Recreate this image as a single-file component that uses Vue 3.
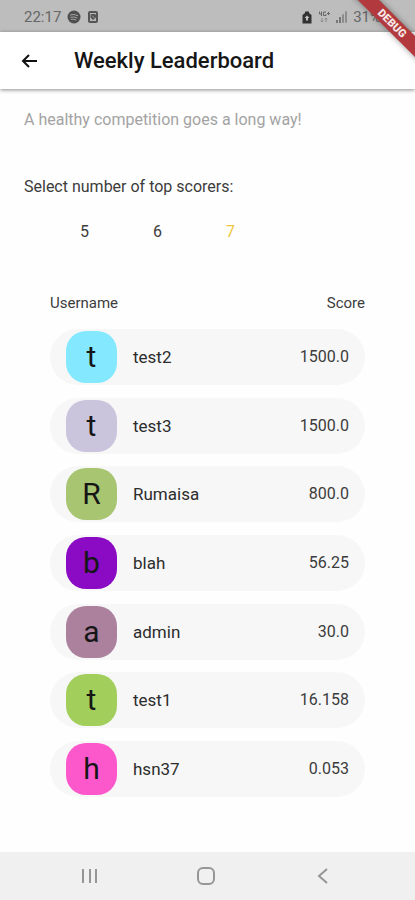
<script setup>
import { ref } from 'vue'

const counts = [5, 6, 7]
const selected = ref(7)

const players = [
  { name: 'test2', score: '1500.0', color: '#84e9ff' },
  { name: 'test3', score: '1500.0', color: '#cbc4dd' },
  { name: 'Rumaisa', score: '800.0', color: '#a8c572' },
  { name: 'blah', score: '56.25', color: '#8a0bc3' },
  { name: 'admin', score: '30.0', color: '#ab819e' },
  { name: 'test1', score: '16.158', color: '#a2cf5b' },
  { name: 'hsn37', score: '0.053', color: '#fd58cb' }
]
</script>

<template>
  <div class="screen">
    <div class="status">
      <span class="clock">22:17</span>
      <svg width="14" height="14" viewBox="0 0 14 14" aria-hidden="true">
        <circle cx="7" cy="7" r="6.5" fill="#4f4f4f" />
        <path d="M3.4 4.9q3.8-1.2 7.3.6M3.8 7.2q3.2-.9 6.1.6M4.2 9.3q2.5-.6 4.7.5" fill="none" stroke="#a4a4a4" stroke-width="1" stroke-linecap="round" />
      </svg>
      <svg width="12" height="14" viewBox="0 0 12 14" aria-hidden="true">
        <rect x="2" y="2" width="8" height="10" rx="1" fill="#b8b8b8" stroke="#555" stroke-width="2" />
        <path d="M4 4h4l1 1v2.500L6 10 3.500 7.500V5z" fill="#555" />
        <path d="M5 5.500 7.500 8" stroke="#999" />
      </svg>
      <span class="spacer"></span>
      <svg width="10" height="13" viewBox="0 0 10 13" aria-hidden="true">
        <path d="M3 .5h4V2l2.500 2v8.500h-9V4L3 2z" fill="#333" />
        <path d="M5 4.500 7.500 7H6v2.500H4V7H2.500z" fill="#c4c4c4" />
      </svg>
      <svg width="12" height="12" viewBox="0 0 12 12" fill="none" stroke="#666" stroke-width="1" aria-hidden="true">
        <path d="M1.500 .5v2.500h2.500M3.500 .5v4.500M8 1H5.500v3.500H8V3M9 2.500h3M10.500 1v3" />
        <path d="M4 7v4M2.700 9.700 4 11l1.300-1.300M8 11V7M6.700 8.300 8 7l1.300 1.300" stroke="#888" />
      </svg>
      <svg width="11" height="12" viewBox="0 0 11 12" aria-hidden="true">
        <path d="M0 9h2v3H0zM3 6h2v6H3z" fill="#777" />
        <path d="M6.500 3.500h1v8h-1zM9.500 .5h1v11h-1z" fill="none" stroke="#8c8c8c" />
      </svg>
      <span class="clock">31%</span>
    </div>
    <div class="ribbon-corner"><span class="ribbon">DEBUG</span></div>

    <header class="bar">
      <button class="back" type="button" aria-label="Back">
        <svg width="16" height="14" viewBox="0 0 16 14" fill="none" stroke="#111" stroke-width="2" aria-hidden="true">
          <path d="M16 7H2M8 1 2 7l6 6" />
        </svg>
      </button>
      <h1>Weekly Leaderboard</h1>
    </header>

    <main>
      <p class="tagline">A healthy competition goes a long way!</p>
      <p id="count-label" class="prompt">Select number of top scorers:</p>
      <div class="counts" role="group" aria-labelledby="count-label">
        <button
          v-for="n in counts"
          :key="n"
          type="button"
          :class="{ active: n === selected }"
          :aria-pressed="n === selected"
          @click="selected = n"
        >{{ n }}</button>
      </div>

      <section class="board">
        <div class="heads"><span>Username</span><span>Score</span></div>
        <ul>
          <li v-for="p in players" :key="p.name">
            <span class="avatar" :style="{ background: p.color }">{{ p.name[0] }}</span>
            <span class="name">{{ p.name }}</span>
            <span class="score">{{ p.score }}</span>
          </li>
        </ul>
      </section>
    </main>

    <nav>
      <button type="button" aria-label="Recent apps">
        <svg width="18" height="18" viewBox="0 0 18 18" stroke="#969696" stroke-width="2" aria-hidden="true">
          <path d="M3 2v14M10 2v14M16 2v14" />
        </svg>
      </button>
      <button type="button" aria-label="Home">
        <svg width="18" height="18" viewBox="0 0 18 18" fill="none" stroke="#969696" stroke-width="2" aria-hidden="true">
          <rect x="1" y="1" width="16" height="16" rx="5" />
        </svg>
      </button>
      <button type="button" aria-label="Back">
        <svg width="18" height="18" viewBox="0 0 18 18" fill="none" stroke="#969696" stroke-width="2" aria-hidden="true">
          <path d="M13 2 5 9l8 7" />
        </svg>
      </button>
    </nav>
  </div>
</template>

<style>
body {
  margin: 0;
  background: #fefefe;
}
</style>

<style scoped>
.screen {
  position: relative;
  display: flex;
  flex-direction: column;
  min-height: 100vh;
  font-family: Roboto, "Liberation Sans", sans-serif;
  font-size: 15px;
  line-height: 20px;
  color: #3c3c3c;
}
button {
  padding: 0;
  border: 0;
  background: none;
  font: inherit;
  color: inherit;
  cursor: pointer;
}
h1, p, ul {
  margin: 0;
  padding: 0;
}
.status {
  display: flex;
  align-items: center;
  gap: 6px;
  height: 32px;
  padding: 2px 34px 0 24px;
  box-sizing: border-box;
  background: #bdbdbd;
}
.clock {
  color: #666;
}
.spacer {
  flex: 1;
}
.ribbon-corner {
  position: absolute;
  top: 0;
  right: 0;
  width: 64px;
  height: 64px;
  overflow: hidden;
}
.ribbon {
  position: absolute;
  top: 16px;
  left: -19px;
  width: 120px;
  transform: rotate(45deg);
  background: #b2393d;
  box-shadow: 0 0 6px rgba(0, 0, 0, 0.4);
  color: #f6e6e6;
  font-size: 11px;
  font-weight: 900;
  line-height: 15px;
  text-align: center;
}
.bar {
  display: flex;
  align-items: center;
  gap: 37px;
  height: 57px;
  padding: 0 21px;
  background: #fff;
  box-shadow: 0 1px 4px rgba(0, 0, 0, 0.45);
}
.back {
  display: flex;
}
h1 {
  font-size: 22px;
  font-weight: 500;
  line-height: 28px;
  color: #161616;
}
main {
  flex: 1;
  display: flex;
  flex-direction: column;
  padding: 21px 24px 55px;
}
.tagline {
  font-size: 16px;
  color: #a3a3a3;
}
.prompt {
  margin-top: 47px;
  font-size: 16px;
}
.counts {
  display: flex;
  gap: 24px;
  margin-top: 25px;
  padding-left: 36px;
  font-size: 16px;
}
.counts button {
  width: 49px;
}
.counts .active {
  color: #eec73c;
}
.board {
  flex: 1;
  display: flex;
  flex-direction: column;
  gap: 16px;
  margin-top: 51px;
  padding: 0 26px;
}
.heads {
  display: flex;
  justify-content: space-between;
}
ul {
  flex: 1;
  display: flex;
  flex-direction: column;
  justify-content: space-between;
  list-style: none;
}
li {
  display: flex;
  align-items: center;
  padding: 2px 16px;
  border-radius: 28px;
  background: #f7f7f7;
}
.avatar {
  width: 51px;
  border-radius: 20px;
  font-size: 30px;
  line-height: 52px;
  text-align: center;
  color: #161616;
}
.name {
  flex: 1;
  margin-left: 16px;
  font-size: 17px;
  color: #2c2c2c;
}
.score {
  font-size: 16px;
}
nav {
  display: flex;
  justify-content: space-around;
  align-items: center;
  height: 48px;
  padding: 0 34px 0 31px;
  background: #f0f0f0;
}
nav button {
  display: flex;
}
</style>
